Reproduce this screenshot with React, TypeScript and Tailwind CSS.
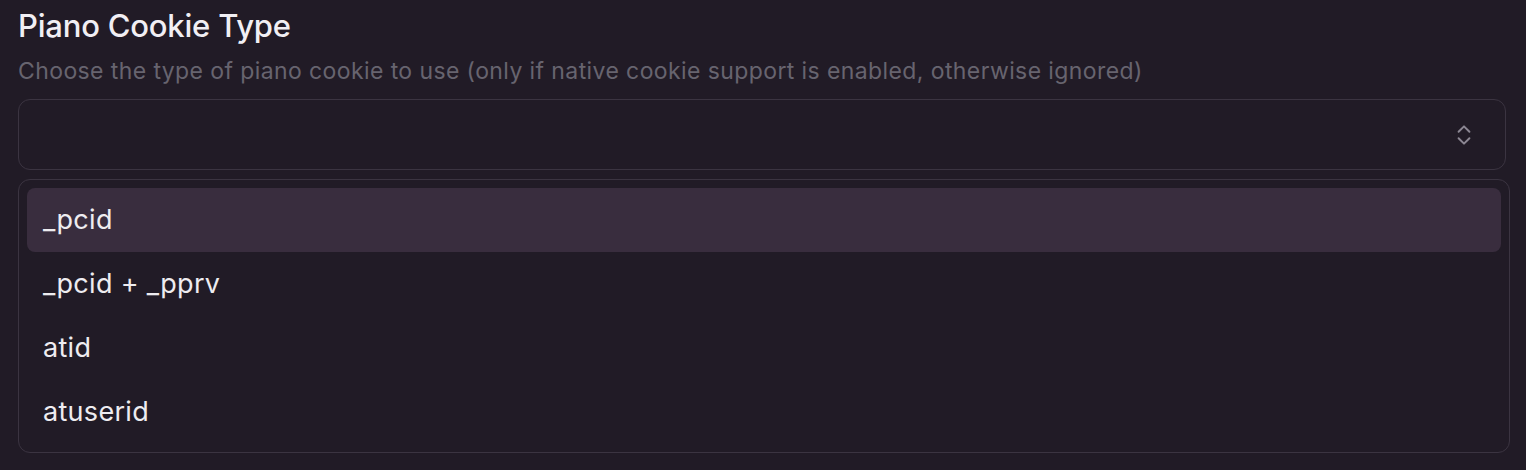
import React from 'react';
import { ChevronsUpDown } from 'lucide-react';

const options = ['_pcid', '_pcid + _pprv', 'atid', 'atuserid'];

export default function App() {
  return (
    <div
      className="w-[1526px] h-[470px] bg-[#211b26] px-[18px] overflow-hidden"
      style={{ fontFamily: 'Inter, "Noto Sans", sans-serif' }}
    >
      <h1 className="text-[31px] leading-[38px] pt-[7px] text-[#f1eff4] font-medium tracking-[-0.2px]">Piano Cookie Type</h1>
      <p className="mt-[12px] text-[23px] leading-[28px] text-[#67646f] tracking-[0.4px]">
        Choose the type of piano cookie to use (only if native cookie support is enabled, otherwise ignored)
      </p>
      <button className="mt-[14px] w-[1488px] h-[71px] rounded-[12px] border border-[#3b3441] flex items-center justify-end pr-[28px]">
        <ChevronsUpDown size={26} strokeWidth={1.8} className="text-[#8c8793]" />
      </button>
      <div className="mt-[9px] w-[1492px] rounded-[12px] border border-[#3b3441] p-[8px]">
        {options.map((o, i) => (
          <div
            key={o}
            className={
              'h-[64px] flex items-center px-[16px] rounded-[8px] text-[27px] tracking-[0.3px] text-[#eeecf0] ' +
              (i === 0 ? 'bg-[#392d3e]' : '')
            }
          >
            {o}
          </div>
        ))}
      </div>
    </div>
  );
}
